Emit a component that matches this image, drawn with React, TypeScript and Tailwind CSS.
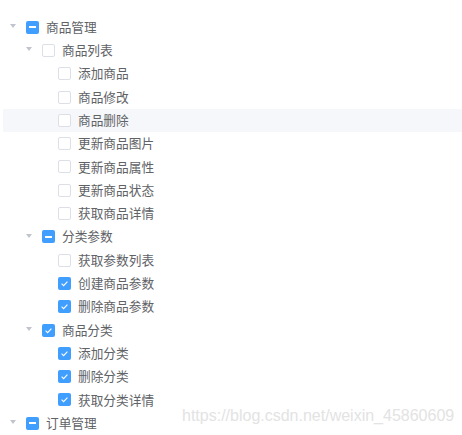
type CheckState = "none" | "half" | "all";

interface TreeRow {
  label: string;
  level: 1 | 2 | 3;
  state: CheckState;
  expandable?: boolean;
  hover?: boolean;
}

const rows: TreeRow[] = [
  { label: "商品管理", level: 1, state: "half", expandable: true },
  { label: "商品列表", level: 2, state: "none", expandable: true },
  { label: "添加商品", level: 3, state: "none" },
  { label: "商品修改", level: 3, state: "none" },
  { label: "商品删除", level: 3, state: "none", hover: true },
  { label: "更新商品图片", level: 3, state: "none" },
  { label: "更新商品属性", level: 3, state: "none" },
  { label: "更新商品状态", level: 3, state: "none" },
  { label: "获取商品详情", level: 3, state: "none" },
  { label: "分类参数", level: 2, state: "half", expandable: true },
  { label: "获取参数列表", level: 3, state: "none" },
  { label: "创建商品参数", level: 3, state: "all" },
  { label: "删除商品参数", level: 3, state: "all" },
  { label: "商品分类", level: 2, state: "all", expandable: true },
  { label: "添加分类", level: 3, state: "all" },
  { label: "删除分类", level: 3, state: "all" },
  { label: "获取分类详情", level: 3, state: "all" },
  { label: "订单管理", level: 1, state: "half", expandable: true },
];

const indent = {
  1: "pl-0",
  2: "pl-[16px]",
  3: "pl-[32px]",
};

function Checkbox({ state }: { state: CheckState }) {
  if (state === "none") {
    return (
      <span className="ml-[2px] mr-[7px] box-border size-[13px] shrink-0 rounded-[2px] border border-[#dcdfe6] bg-white" />
    );
  }
  return (
    <span className="ml-[2px] mr-[7px] flex size-[13px] shrink-0 items-center justify-center rounded-[2px] bg-[#409eff]">
      {state === "half" ? (
        <span className="h-[2px] w-[7px] bg-white" />
      ) : (
        <svg width="13" height="13" viewBox="0 0 13 13" fill="none">
          <polyline
            points="3.6,6.6 5.6,8.6 9.4,4.6"
            stroke="white"
            strokeWidth="1.1"
          />
        </svg>
      )}
    </span>
  );
}

export default function App() {
  return (
    <div className="relative h-[435px] w-[462px] overflow-hidden bg-white pl-[3px] pt-[15.5px] font-['Noto_Sans_CJK_SC',sans-serif] text-[12.7px] text-[#606266]">
      {rows.map((row) => (
        <div
          key={row.label}
          className={`flex h-[23.3px] items-center ${indent[row.level]} ${
            row.hover ? "bg-[#f5f7fa]" : ""
          }`}
        >
          <span className="flex w-[21px] shrink-0 items-center justify-center pr-[1px] pb-[2px]">
            {row.expandable ? (
              <span className="h-0 w-0 border-x-[3px] border-t-[4px] border-x-transparent border-t-[#c0c4cc]" />
            ) : null}
          </span>
          <Checkbox state={row.state} />
          <span className="leading-none">{row.label}</span>
        </div>
      ))}
      <span className="absolute left-[182px] top-[408px] font-['Liberation_Sans',Arial,sans-serif] text-[16px] leading-none text-[#e3e3e3]">
        https://blog.csdn.net/weixin_45860609
      </span>
    </div>
  );
}
